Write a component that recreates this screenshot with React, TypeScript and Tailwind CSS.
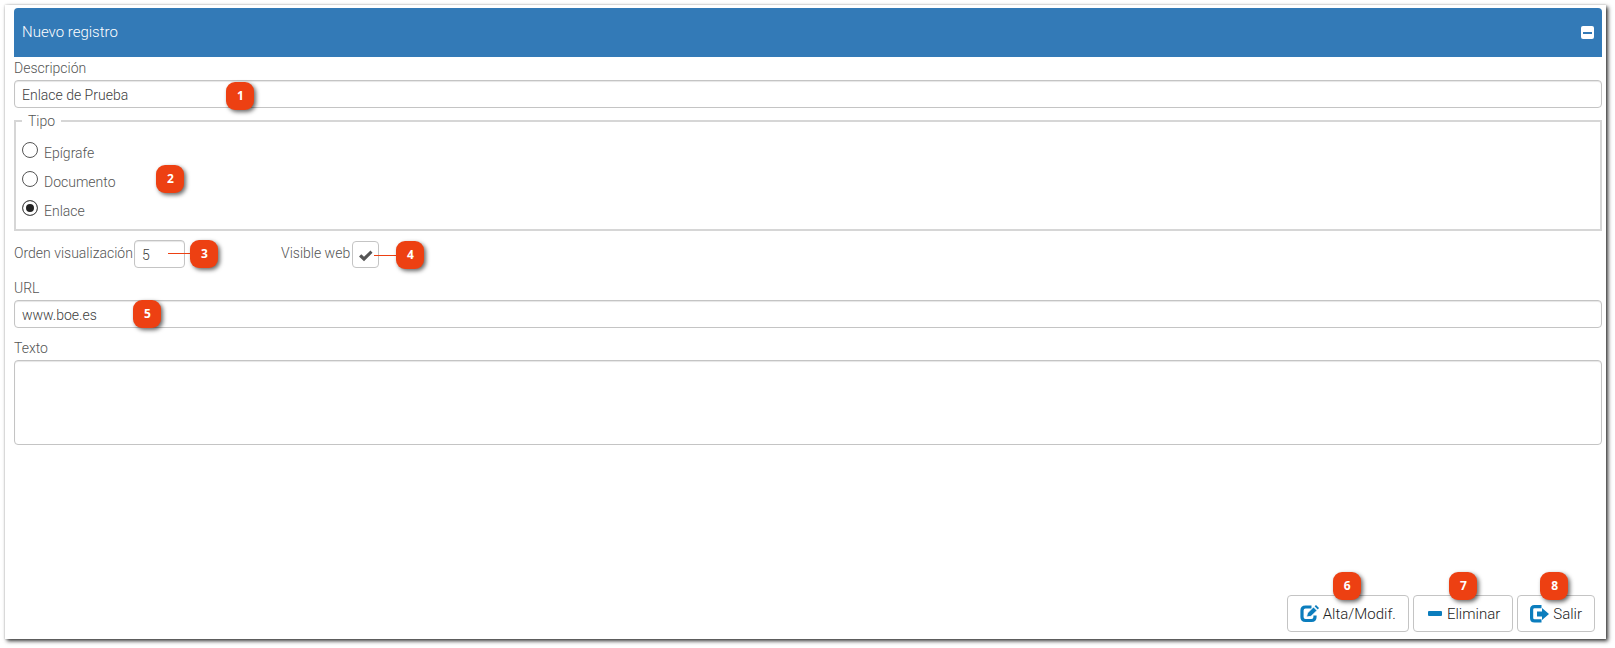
import { ReactNode, useState } from 'react';

const inputClass =
  'w-full rounded border border-[#c4c4c4] px-[7px] text-sm font-light text-[#404040] shadow-[inset_0_1px_1px_rgba(0,0,0,0.1)] outline-none';

const buttonClass =
  'relative flex h-[37px] items-center rounded border border-[#c4c4c4] bg-white px-3 text-[15px] font-light text-[#222]';

function Badge({ n, className }: { n: number; className: string }) {
  return (
    <span
      className={`absolute flex size-7 items-center justify-center rounded-[9px] bg-[#ed4012] pl-px font-['Open_Sans',sans-serif] text-xs font-bold text-white shadow-[2px_2px_4px_rgba(0,0,0,0.6)] ${className}`}
    >
      {n}
    </span>
  );
}

function EditIcon() {
  return (
    <svg className="mr-1 h-[18px] w-[19px] flex-none" viewBox="0 0 19 18" fill="none">
      <path d="M11.500 2H5.500Q2 2 2 5.500V12Q2 15.500 5.500 15.500H11.500Q15 15.500 15 12V10.500" stroke="#0b7dbd" strokeWidth="3.2" />
      <path d="M6.500 12L7.500 8L13.500 2L17 5.500L11 11.300Z" fill="#0b7dbd" stroke="#fff" strokeWidth="0.8" />
      <path d="M14.600 1.200L16 0L19 3L17.800 4.400Z" fill="#0b7dbd" />
    </svg>
  );
}

function MinusIcon() {
  return (
    <svg className="mr-1 h-[18px] w-[17px] flex-none" viewBox="0 0 17 18" fill="#0b7dbd">
      <rect x="2" y="6" width="14" height="5" rx="1" />
    </svg>
  );
}

function ExitIcon() {
  return (
    <svg className="mr-1 h-[18px] w-[19px] flex-none" viewBox="0 0 19 18" fill="none">
      <path d="M11.500 1.600H4.500Q1.600 1.600 1.600 4.500V13Q1.600 15.900 4.500 15.900H11.500" stroke="#0b7dbd" strokeWidth="3.2" />
      <path d="M7 6.500H12V3L19 9L12 15V11.500H7Z" fill="#0b7dbd" />
    </svg>
  );
}

function Field({ id, label, children }: { id: string; label: string; children: ReactNode }) {
  return (
    <div>
      <label htmlFor={id} className="block h-[23px] leading-[22px]">
        {label}
      </label>
      <div className="relative flex">{children}</div>
    </div>
  );
}

const tipos = ['Epígrafe', 'Documento', 'Enlace'];

export default function App() {
  const [descripcion, setDescripcion] = useState('Enlace de Prueba');
  const [tipo, setTipo] = useState('Enlace');
  const [orden, setOrden] = useState('5');
  const [visible, setVisible] = useState(true);
  const [url, setUrl] = useState('www.boe.es');
  const [texto, setTexto] = useState('');

  return (
    <div className="flex min-h-screen bg-white pt-[5px] pr-[9px] pb-[9px] pl-[5px] font-[Roboto,sans-serif] text-sm font-light text-[#555]">
      <form
        className="flex flex-1 flex-col bg-white px-[9px] pt-[3px] pb-[7px] shadow-[2px_2px_4px_rgba(0,0,0,0.8),0_0_2px_rgba(0,0,0,0.2)]"
        onSubmit={(e) => e.preventDefault()}
      >
        <header className="mr-[-5px] flex h-[49px] items-center justify-between rounded-t bg-[#337ab7] px-2 text-white">
          <h1 className="text-[15px]">Nuevo registro</h1>
          <button type="button" aria-label="Contraer" className="flex size-[13px] items-center justify-center rounded-[2px] bg-white">
            <span className="h-[2px] w-[9px] bg-[#337ab7]" />
          </button>
        </header>

        <div className="mr-[-5px]">
          <Field id="descripcion" label="Descripción">
            <input id="descripcion" className={`${inputClass} h-7 pt-0.5`} value={descripcion} onChange={(e) => setDescripcion(e.target.value)} />
            <Badge n={1} className="top-0.5 left-[212px]" />
          </Field>

          <fieldset className="relative mt-[3px] border-2 border-[#d6d6d6] px-1.5 pb-[5px]">
            <legend className="px-1.5 leading-5">Tipo</legend>
            <div className="mt-1.5 flex flex-col">
              {tipos.map((t) => (
                <label key={t} className="flex h-[29px] items-center gap-1.5">
                  <input
                    type="radio"
                    name="tipo"
                    checked={tipo === t}
                    onChange={() => setTipo(t)}
                    className="mb-1 size-4 appearance-none rounded-full border border-[#555] bg-white checked:bg-[#222] checked:shadow-[inset_0_0_0_3px_white]"
                  />
                  <span className="pt-0.5">{t}</span>
                </label>
              ))}
            </div>
            <Badge n={2} className="top-[34px] left-[140px]" />
          </fieldset>

          <div className="mt-[9px] flex h-7 items-center">
            <label htmlFor="orden" className="w-[120px] pb-0.5">
              Orden visualización
            </label>
            <div className="relative w-[51px]">
              <input id="orden" className={`${inputClass} h-7 pt-0.5`} value={orden} onChange={(e) => setOrden(e.target.value)} />
              <span className="absolute top-[13px] left-[34px] h-px w-6 bg-[#ed4012]" />
              <Badge n={3} className="top-0 left-14" />
            </div>
            <label htmlFor="visible" className="ml-24 w-[71px] pb-0.5">
              Visible web
            </label>
            <div className="relative size-[27px]">
              <input
                id="visible"
                type="checkbox"
                checked={visible}
                onChange={(e) => setVisible(e.target.checked)}
                className="block size-[27px] appearance-none rounded border border-[#c4c4c4] bg-white"
              />
              {visible && (
                <svg className="pointer-events-none absolute top-[9px] left-[7px] h-3 w-[14px]" viewBox="0 0 14 12">
                  <path d="M0 6.500L2.300 4.200L5 6.800L11.500 0.500L13.500 2.800L5 11.300Z" fill="#555" />
                </svg>
              )}
              <span className="absolute top-[14px] left-[22px] h-px w-6 bg-[#ed4012]" />
              <Badge n={4} className="top-0 left-11" />
            </div>
          </div>

          <div className="mt-[9px]">
            <Field id="url" label="URL">
              <input id="url" className={`${inputClass} h-7 pt-0.5`} value={url} onChange={(e) => setUrl(e.target.value)} />
              <Badge n={5} className="top-0 left-[119px]" />
            </Field>
          </div>

          <div className="mt-[9px]">
            <Field id="texto" label="Texto">
              <textarea id="texto" className={`${inputClass} h-[85px] resize-none py-1`} value={texto} onChange={(e) => setTexto(e.target.value)} />
            </Field>
          </div>
        </div>

        <div className="mt-auto mr-0.5 flex justify-end gap-1 pt-12">
          <button type="submit" className={buttonClass}>
            <EditIcon />
            <span className="pt-0.5">Alta/Modif.</span>
            <Badge n={6} className="-top-6 left-[45px]" />
          </button>
          <button type="button" className={buttonClass}>
            <MinusIcon />
            <span className="pt-0.5">Eliminar</span>
            <Badge n={7} className="-top-6 left-[35px]" />
          </button>
          <button type="button" className={buttonClass}>
            <ExitIcon />
            <span className="pt-0.5">Salir</span>
            <Badge n={8} className="-top-6 left-[22px]" />
          </button>
        </div>
      </form>
    </div>
  );
}
